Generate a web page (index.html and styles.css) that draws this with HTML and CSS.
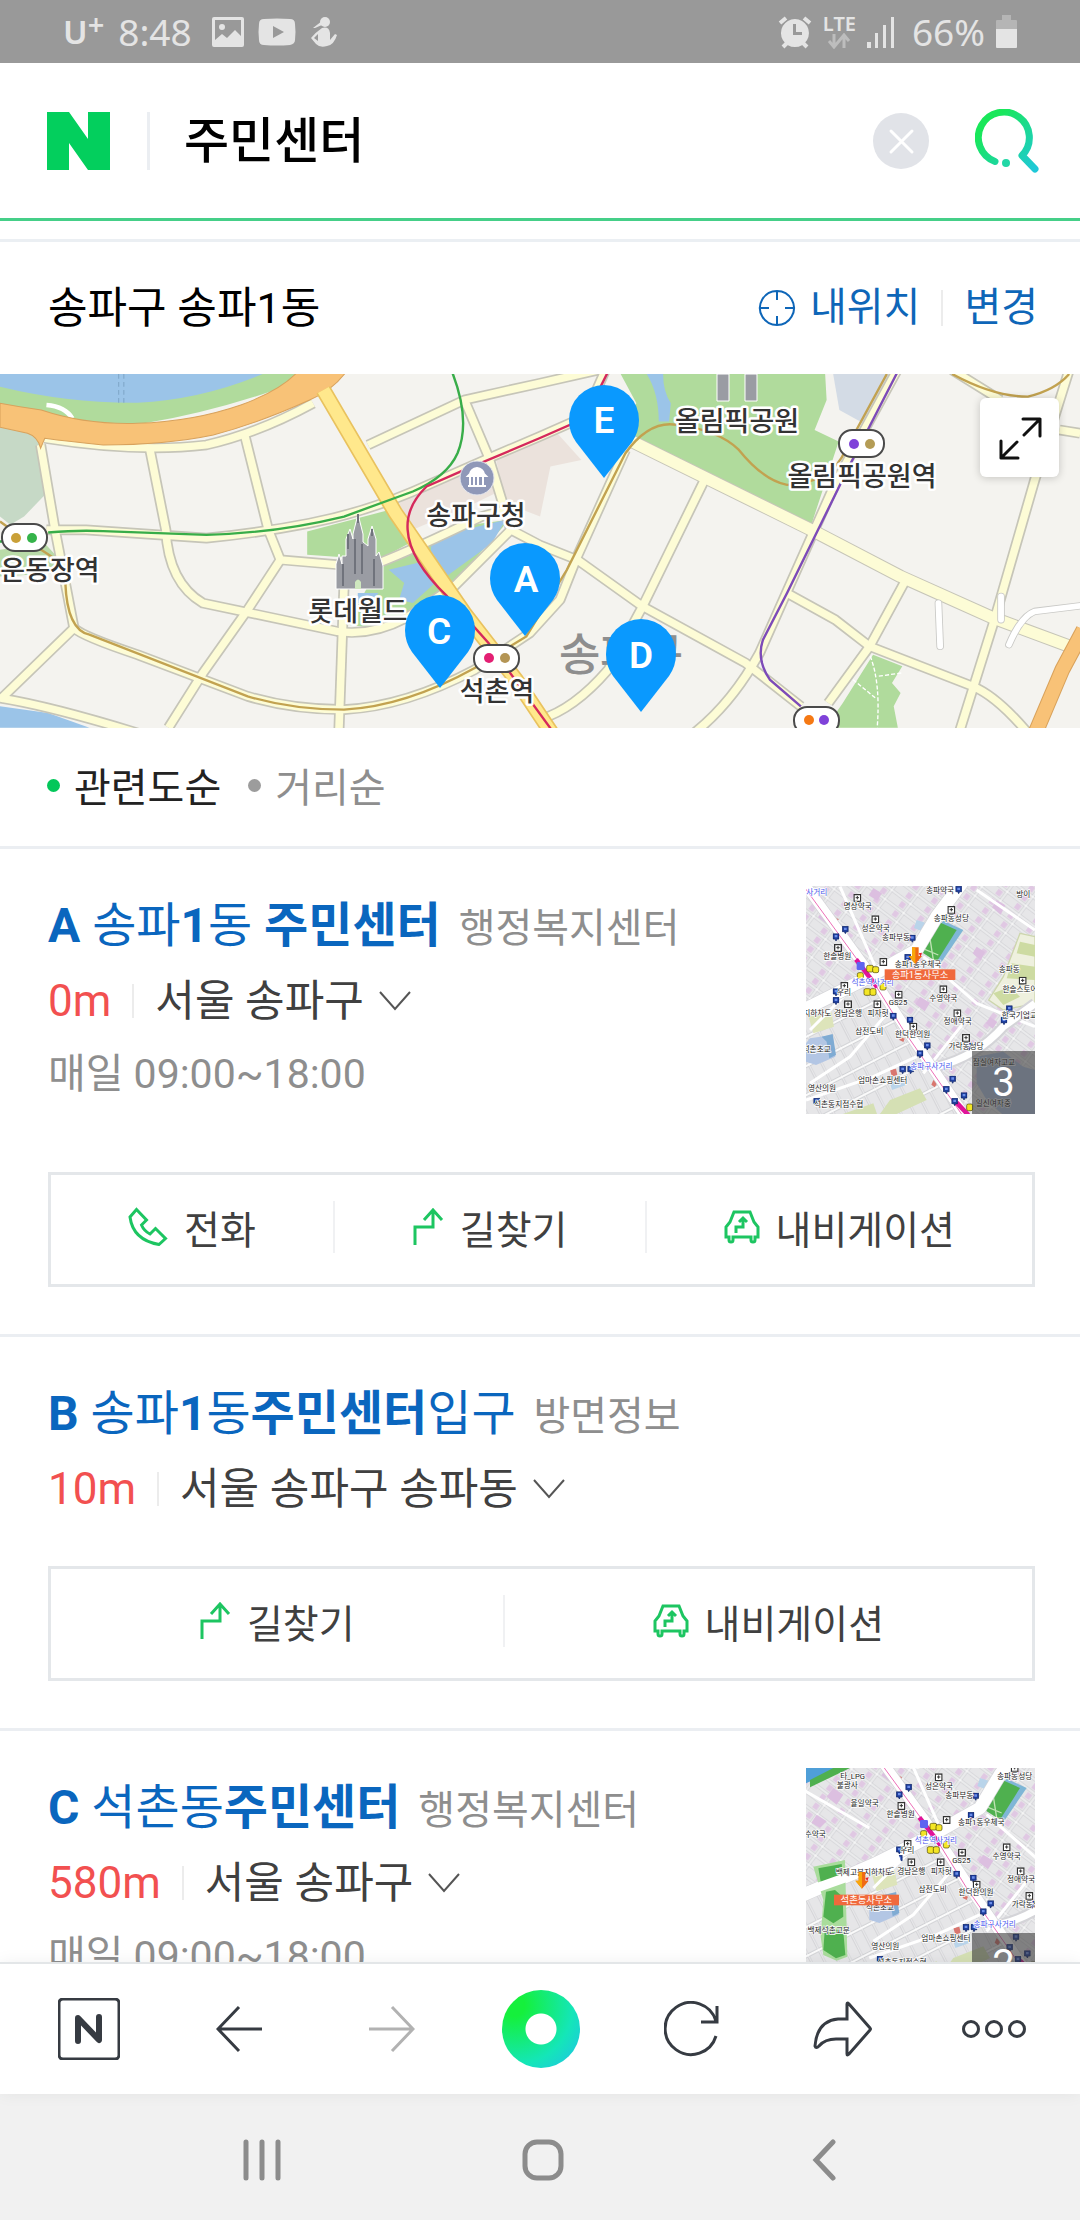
FILE: index.html
```html
<!DOCTYPE html>
<html lang="ko">
<head>
    <meta charset="UTF-8">
    <meta name="viewport" content="width=device-width, initial-scale=1.0">
    <title>주민센터</title>
    <link rel="stylesheet" href="styles.css">
</head>
<body>

    <!-- Shared icons -->
    <svg class="defs" aria-hidden="true">
        <symbol id="icon-phone" viewBox="0 0 40 40">
            <path d="M8.500 2.500 18.500 13 13.500 18Q16 24 22 27L27.500 21.500 37.500 31.500 31 37.500Q5 33 2 10Z"/>
        </symbol>
        <symbol id="icon-route" viewBox="0 0 32 40">
            <path d="M3 38V20H21V4M12 13 21 3 30 13"/>
        </symbol>
        <symbol id="icon-car" viewBox="0 0 36 36">
            <path d="M10 3H26L30 13 34 18V28H31V31Q31 33 29 33T27 31V28H9V31Q9 33 7 33T5 31V28H2V18L6 13Z"/>
            <path d="M12 24V18H19V10M15 13 19 9 23 13"/>
        </symbol>
        <symbol id="icon-down" viewBox="0 0 32 20">
            <path d="M1 1 16 18 31 1"/>
        </symbol>
        <pattern id="blocksA" width="36" height="78" patternUnits="userSpaceOnUse" patternTransform="rotate(-27)">
            <rect width="36" height="78" fill="#fafafa"/>
            <rect x="3" y="4" width="31" height="70" fill="#e6e6e8" stroke="#c6c7cb" stroke-width="2"/>
        </pattern>
        <pattern id="blocksB" width="70" height="34" patternUnits="userSpaceOnUse" patternTransform="rotate(37)">
            <rect width="70" height="34" fill="#fafafa"/>
            <rect x="3" y="3" width="64" height="28" fill="#e6e6e8" stroke="#c6c7cb" stroke-width="2"/>
            <rect x="44" y="8" width="16" height="18" fill="#e0c8e3"/>
        </pattern>
        <symbol id="poi" viewBox="0 0 20 24">
            <path d="M1 1H19V17H13L10 23 7 17H1Z" fill="#1f3f9e" stroke="#0b2060" stroke-width="2"/>
            <path d="M6 5H14V12H6Z" fill="#6c8ee8"/>
        </symbol>
        <symbol id="shop" viewBox="0 0 24 24">
            <path d="M2 2H22V22H2Z" fill="#fff" stroke="#333" stroke-width="4"/>
            <path d="M12 6V16M7 11H17" stroke="#333" stroke-width="3"/>
        </symbol>
        <!-- City blocks around Seokchon station, used by both thumbnails -->
        <g id="streets">
            <rect x="-160" y="0" width="1000" height="900" fill="url(#blocksB)"/>
            <path d="M-160 480 230 320 530 760V900H-160Z" fill="url(#blocksA)"/>
            <path d="M260 320 400 240 735 560V740H540Z" fill="url(#blocksB)"/>
            <g fill="#dcbfe0">
                <path d="M250 55 276 70 262 92 236 76ZM100 120 122 136 108 160 84 142ZM620 90 646 106 632 134 606 112ZM560 230 585 246 572 272 548 250ZM390 380 420 398 404 424 376 402ZM600 440 622 456 608 476 588 460ZM160 200 182 212 172 236 150 220ZM-60 180-30 200-50 230-80 206ZM-110 260-80 280-100 300-126 284Z"/>
            </g>
            <g fill="#b9d4ea">
                <path d="M380 150 410 160 400 185 372 174ZM300 380 322 396 310 416 292 400ZM400 480 424 492 412 510 390 498ZM60 400 90 392 96 410 66 420ZM300 640 340 625 346 646 306 660Z"/>
            </g>
            <g fill="#d9766f">
                <path d="M132 140 146 148 140 160 128 152ZM300 600 318 596 322 614 306 620ZM430 630 442 640 434 652 424 644ZM610 492 626 498 620 508 608 504ZM330 500 344 506 340 516 328 510Z"/>
            </g>
            <!-- Parks and schools -->
            <path d="M690 190 735 200V400L640 420 596 390 640 320Z" fill="#eef0de" stroke="#cdd6ad" stroke-width="4"/>
            <path d="M690 215 735 225V260L680 250ZM665 280 735 290V330L650 325ZM610 370 660 350 690 380 640 405Z" fill="#cddba2"/>
            <path d="M56 440 124 425 132 470 70 490Z" fill="#dde4ba"/>
            <path d="M60 505 128 495 136 560 78 585 48 575V520Z" fill="#b3c6e4"/>
            <path d="M95 500 128 492 138 555 118 565 110 515Z" fill="#7fabd3"/>
            <path d="M560 560 640 545 700 590 735 600V735H640L590 690 560 640Z" fill="#b3c6e4"/>
            <path d="M300 690 390 655 410 690 320 732H270ZM150 735 250 700 262 735Z" fill="#d5e0b4"/>
            <path d="M460 152 520 180 455 275 385 240Z" fill="#7fb6d6"/>
            <path d="M452 158 500 180 440 275 385 240Z" fill="#4fb04f"/>
            <path d="M390 232 445 255M420 205 430 270" stroke="#bfe3b4" stroke-width="4" fill="none"/>
            <!-- Streets -->
            <g fill="none" stroke-linejoin="round">
                <path d="M260 300 150 50M735 180 560 60M400 260 560 400 735 470M180 360 60 480M300 420 180 560 60 640M380 560 250 620 48 690M520 460 400 610M-160 180 48 300" stroke="#fff" stroke-width="9"/>
                <path d="M-160 505 60 410 230 325 380 240 440 140 530 20" stroke="#d4d4d8" stroke-width="42"/>
                <path d="M20 10 250 325 350 480 540 760M440 590Q560 560 640 470L735 400" stroke="#d4d4d8" stroke-width="34"/>
                <path d="M-160 505 60 410 230 325 380 240 440 140 530 20" stroke="#fff" stroke-width="38"/>
                <path d="M20 10 250 325 350 480 540 760" stroke="#fff" stroke-width="30"/>
                <path d="M440 590Q560 560 640 470L735 400" stroke="#fff" stroke-width="22"/>
                <path d="M20 20 250 335 340 480 520 740" stroke="#ec6fb8" stroke-width="3"/>
                <path d="M198 268 262 352M500 698 535 735" stroke="#e0149a" stroke-width="14"/>
            </g>
            <!-- Station exits -->
            <g fill="#f4e626" stroke="#4a4300" stroke-width="2">
                <rect x="230" y="286" width="20" height="20" rx="5"/>
                <rect x="248" y="290" width="18" height="18" rx="5"/>
                <rect x="222" y="356" width="20" height="20" rx="5"/>
                <rect x="240" y="356" width="18" height="20" rx="5"/>
                <rect x="270" y="340" width="18" height="20" rx="5"/>
                <rect x="202" y="308" width="18" height="18" rx="5"/>
                <rect x="530" y="702" width="18" height="20" rx="5"/>
            </g>
            <rect x="200" y="276" width="24" height="24" rx="4" fill="#5f63f0"/>
            <!-- Markers -->
            <use href="#poi" x="128" y="190" width="20" height="24"/>
            <use href="#poi" x="156" y="168" width="20" height="24"/>
            <use href="#poi" x="357" y="194" width="20" height="24"/>
            <use href="#poi" x="343" y="252" width="20" height="24"/>
            <use href="#poi" x="496" y="48" width="20" height="24"/>
            <use href="#poi" x="128" y="355" width="20" height="24"/>
            <use href="#poi" x="128" y="381" width="20" height="24"/>
            <use href="#poi" x="300" y="428" width="20" height="24"/>
            <use href="#poi" x="350" y="440" width="20" height="24"/>
            <use href="#poi" x="402" y="517" width="20" height="24"/>
            <use href="#poi" x="380" y="541" width="20" height="24"/>
            <use href="#poi" x="328" y="588" width="20" height="24"/>
            <use href="#poi" x="352" y="588" width="20" height="24"/>
            <use href="#poi" x="527" y="518" width="20" height="24"/>
            <use href="#poi" x="648" y="406" width="20" height="24"/>
            <use href="#poi" x="632" y="441" width="20" height="24"/>
            <use href="#poi" x="478" y="617" width="20" height="24"/>
            <use href="#poi" x="459" y="648" width="20" height="24"/>
            <use href="#poi" x="512" y="667" width="20" height="24"/>
            <use href="#poi" x="484" y="684" width="20" height="24"/>
            <use href="#poi" x="70" y="684" width="20" height="24"/>
            <use href="#shop" x="190" y="72" width="24" height="24"/>
            <use href="#shop" x="244" y="136" width="24" height="24"/>
            <use href="#shop" x="472" y="108" width="24" height="24"/>
            <use href="#shop" x="132" y="222" width="24" height="24"/>
            <use href="#shop" x="268" y="264" width="24" height="24"/>
            <use href="#shop" x="151" y="336" width="24" height="24"/>
            <use href="#shop" x="162" y="391" width="24" height="24"/>
            <use href="#shop" x="250" y="391" width="24" height="24"/>
            <use href="#shop" x="314" y="362" width="24" height="24"/>
            <use href="#shop" x="448" y="346" width="24" height="24"/>
            <use href="#shop" x="490" y="418" width="24" height="24"/>
            <use href="#shop" x="516" y="492" width="24" height="24"/>
            <use href="#shop" x="686" y="320" width="24" height="24"/>
            <use href="#shop" x="358" y="458" width="24" height="24"/>
            <g class="thumb-label">
                <text x="203" y="116">명상약국</text>
                <text x="257" y="182">성은약국</text>
                <text x="318" y="211">송파부동</text>
                <text x="450" y="68">송파약국</text>
                <text x="484" y="154">송파동성당</text>
                <text x="142" y="267">한솔병원</text>
                <text x="658" y="307">송파동</text>
                <text x="690" y="365">한솔스토어</text>
                <text x="460" y="392">수영약국</text>
                <text x="162" y="374">우리</text>
                <text x="324" y="406">GS25</text>
                <text x="174" y="438">경남은행</text>
                <text x="264" y="438">피자헛</text>
                <text x="238" y="491">삼전도비</text>
                <text x="368" y="502">한덕한의원</text>
                <text x="503" y="463">정애약국</text>
                <text x="528" y="536">가락동성당</text>
                <text x="278" y="640">엄마손쇼핑센터</text>
                <text x="96" y="664">영산의원</text>
                <text x="146" y="712">석촌동지점수협</text>
                <text x="612" y="584">잠실여자고교</text>
                <text x="610" y="708">일신여자중</text>
                <text x="688" y="444">한국기업교</text>
                <text x="700" y="82">방이</text>
                <text x="82" y="438">지하차도</text>
                <text x="80" y="546">석촌초교</text>
                <g class="thumb-label-blue">
                    <text x="70" y="74">길사거리</text>
                    <text x="248" y="345">석촌역사거리</text>
                    <text x="424" y="597">송파구사거리</text>
                </g>
            </g>
        </g>
        <g id="here">
            <path d="M4-36H24V-10H34L14 14-6-10H4Z" fill="#f06a14"/>
            <path d="M4-36H14V14L-6-10H4Z" fill="#f8a70c"/>
            <path d="M24-18 34-20 30-8Z" fill="#e8202c"/>
        </g>
    </svg>

    <div class="status-bar">
        <div class="status-left">
            <span class="carrier">U<sup>+</sup></span>
            <span>8:48</span>
            <svg class="picture-icon" width="32" height="30" viewBox="0 0 32 30">
                <path fill-rule="evenodd" d="M2 0H30Q32 0 32 2V28Q32 30 30 30H2Q0 30 0 28V2Q0 0 2 0ZM3 3V23L10 17 15 21 23 13 29 19V3Z"/>
                <circle cx="10" cy="10" r="3"/>
            </svg>
            <svg width="38" height="28" viewBox="0 0 38 28">
                <path fill-rule="evenodd" d="M6 1Q19 0 32 1 37 1 37 6 38 14 37 22 37 26 32 27 19 28 6 27 1 27 1 22 0 14 1 6 1 1 6 1ZM15 8V20L26 14Z"/>
            </svg>
            <svg width="28" height="32" viewBox="0 0 28 32">
                <circle cx="15" cy="6" r="5"/>
                <path d="M12 5 3 12 5 12 12 9ZM12 12Q19 10 20 17V24L25 18 27 19Q24 29 17 30 10 32 6 28L1 22Q6 16 12 12ZM8 18 4 22 8 25Z" fill-rule="evenodd"/>
            </svg>
        </div>
        <div class="status-right">
            <svg width="34" height="34" viewBox="0 0 34 34">
                <path fill-rule="evenodd" d="M17 4A14 14 0 1 1 16.900 4ZM15 9V20H24V17H18V9Z"/>
                <path d="M2 8 8 3M32 8 26 3M5 32 9 28M29 32 25 28" stroke="#e4e4e4" stroke-width="4"/>
            </svg>
            <span class="network">
                <span>LTE</span>
                <svg width="24" height="16" viewBox="0 0 24 16"><path d="M7 1V13M2 8 7 14 12 8M17 15V3M12 8 17 2 22 8" fill="none" stroke="#bdbdbd" stroke-width="3"/></svg>
            </span>
            <svg width="28" height="32" viewBox="0 0 28 32"><path d="M0 26H4V32H0ZM8 17H11V32H8ZM16 9H19V32H16ZM24 1H27V32H24Z"/></svg>
            <span class="battery-text">66%</span>
            <svg width="22" height="34" viewBox="0 0 22 34">
                <path d="M6 0H15V5H20Q21 5 21 6V14H0V6Q0 5 1 5H6Z" fill="#b5b5b5"/>
                <path d="M0 14H21V32Q21 33 20 33H1Q0 33 0 32Z"/>
            </svg>
        </div>
    </div>

    <form class="search" role="search" onsubmit="return false">
        <a class="search-logo" href="#" aria-label="NAVER">
            <svg width="63" height="58" viewBox="0 0 63 58"><path d="M0 0H22L41 27V0H63V58H41L22 31V58H0Z" fill="#03cf5d"/></svg>
        </a>
        <input class="search-input" type="text" value="주민센터" aria-label="검색어">
        <button class="icon-button" type="reset" aria-label="지우기">
            <svg width="56" height="56" viewBox="0 0 56 56">
                <circle cx="28" cy="28" r="28" fill="#e1e3e8"/>
                <path d="M18 18 39 39M39 18 18 39" stroke="#fff" stroke-width="3" stroke-linecap="round"/>
            </svg>
        </button>
        <button class="icon-button search-submit" type="submit" aria-label="검색">
            <svg width="64" height="64" viewBox="0 0 64 64">
                <linearGradient id="searchFill" x1="0" y1="0" x2="1" y2="1">
                    <stop offset="0.200" stop-color="#19e75a"/>
                    <stop offset="1" stop-color="#1fc8d8"/>
                </linearGradient>
                <path d="M20 52.500A25.500 25.500 0 1 1 47 46.500L60 60" fill="none" stroke="url(#searchFill)" stroke-width="7" stroke-linecap="round" stroke-linejoin="round"/>
                <circle cx="31" cy="54" r="4" fill="#22d7a6"/>
            </svg>
        </button>
    </form>

    <main class="content">
        <div class="location">
            <h1 class="location-name">송파구 송파1동</h1>
            <button class="location-button" type="button">
                <svg width="38" height="38" viewBox="0 0 38 38"><path d="M19 2A17 17 0 1 1 18.900 2ZM19 2V11M19 27V36M2 19H11M27 19H36" fill="none" stroke="#0e66b8" stroke-width="2"/></svg>
                내위치
            </button>
            <button class="location-button" type="button">변경</button>
        </div>

        <div class="map">
            <svg class="map-image" viewBox="0 0 1080 354">
                <rect width="1080" height="354" fill="#f4f3ef"/>
                <g transform="translate(0 -4) scale(0.344 0.333)">
                    <defs>
                        <g id="roads" fill="none" stroke-linejoin="round">
                            <path d="M118 225 160 480 190 640 215 775 0 990"/>
                            <path d="M435 235 482 480Q490 640 590 700L980 785Q1080 800 1180 745L1320 650 1485 480 1568 525 1678 570 1868 710 2168 880 2328 1010"/>
                            <path d="M710 190 780 480 815 570 720 720 590 910 490 1074"/>
                            <path d="M815 570 985 585 1100 580Q1200 540 1400 440L1470 420"/>
                            <path d="M0 985Q150 1010 400 1090"/>
                            <path d="M215 775Q240 800 400 855L720 980Q850 1020 1000 1020 1180 1010 1380 900L1540 790 1628 690 1678 560 1818 240"/>
                            <path d="M130 205Q400 250 600 225 750 190 910 100"/>
                            <path d="M1000 650 985 1090"/>
                            <path d="M1070 225 1350 90 1568 40 1740 0M1350 90 1420 260 1485 480"/>
                            <path d="M135 480H250L600 505Q750 490 900 460 1050 430 1200 365L1420 265 1568 200 1700 140 1760 0"/>
                            <path d="M1838 215 2358 480 2618 620 2888 745 3136 840" stroke-width="34"/>
                            <path d="M2048 330 1868 710 1768 900Q1668 1020 1568 1050"/>
                            <path d="M2608 0 2428 340 2208 850Q2128 1000 2018 1090"/>
                            <path d="M2288 670 2428 750 2528 830 2828 950Q2898 980 2988 1090"/>
                            <path d="M2628 640 2528 830 2408 1000"/>
                            <path d="M3108 0 3008 330 2888 760 2788 1090M3080 180 3140 190M2768 0 2908 90"/>
                        </g>
                    </defs>
                    <!-- Water, parks and blocks -->
                    <path d="M0 0H890L800 60Q600 130 420 160 300 165 200 145L0 105Z" fill="#b0db9c"/>
                    <path d="M0 0H790Q600 88 400 98 200 100 0 50Z" fill="#9bc4e8"/>
                    <path d="M345 12V98M360 12V98" stroke="#7fa6c8" stroke-width="3" stroke-dasharray="14 10"/>
                    <path d="M135 105Q190 110 210 145" fill="none" stroke="#fff" stroke-width="14"/>
                    <path d="M0 172 85 190Q105 200 115 225L135 370 70 440 30 465 0 440Z" fill="#c6d9c6"/>
                    <path d="M0 540 130 520 165 560 160 610 0 620Z" fill="#b9dba8"/>
                    <path d="M0 1010 140 1030 260 1074H0Z" fill="#9bc4e8"/>
                    <path d="M893 485 1150 415 1190 520 1100 570 893 555Z" fill="#b0db9c"/>
                    <path d="M1100 590 1200 530 1330 470 1480 450 1320 640 1180 730 1090 775 1010 765Z" fill="#b0db9c"/>
                    <path d="M1255 515 1330 485 1470 450 1430 520 1290 625 1250 570Z" fill="#9bc4e8"/>
                    <path d="M1130 600 1230 575 1275 630 1200 700 1160 690 1175 640ZM1040 670H1100L1080 700H1040Z" fill="#9bc4e8"/>
                    <path d="M1160 400 1240 350 1350 310 1420 290 1440 370 1380 400 1200 480ZM1440 260 1568 210 1620 190 1690 270 1600 290 1570 440 1470 400Z" fill="#ebe2dc"/>
                    <path d="M1798 0H2398L2403 90 2368 180 2438 215 2360 460 1838 220 1780 200 1850 100Z" fill="#b0db9c"/>
                    <path d="M1880 0H1928Q1925 60 1950 100L1945 155H1915Q1915 70 1880 12Z" fill="#9bc4e8"/>
                    <path d="M2420 0H2600L2510 160 2440 120Z" fill="#d3dbe5"/>
                    <path d="M2538 855 2623 890 2593 940 2618 970 2598 1010 2610 1074H2400L2450 1000Z" fill="#b0db9c"/>
                    <path d="M2530 860Q2560 940 2550 1074M2480 930 2545 985M2620 910 2550 920" fill="none" stroke="#fff" stroke-width="4" stroke-dasharray="12 6"/>
                    <!-- Roads -->
                    <use href="#roads" stroke="#c6c5b8" stroke-width="32"/>
                    <path d="M1838 215 2358 480 2618 620 2888 745 3136 840" fill="none" stroke="#c6c5b8" stroke-width="40"/>
                    <use href="#roads" stroke="#fdfcd6" stroke-width="22"/>
                    <path d="M2728 700 2733 830M2933 825Q2968 740 3008 725L3140 708M2910 680V750" fill="none" stroke="#c9c9c6" stroke-width="22" stroke-linecap="round"/>
                    <path d="M2728 700 2733 830M2933 825Q2968 740 3008 725L3140 708M2910 680V750" fill="none" stroke="#fff" stroke-width="17" stroke-linecap="round"/>
                    <path d="M0 100Q60 112 120 120 250 165 400 160 560 155 700 105 820 60 870 0H1010Q970 60 900 90 750 160 620 195 480 225 300 225 200 215 130 205L118 235Q110 200 80 190L0 172Z" fill="#f8c277" stroke="#d8a25c" stroke-width="3"/>
                    <path d="M940 60 1150 430 1350 730 1500 930 1610 1100" fill="none" stroke="#e9c25f" stroke-width="46"/>
                    <path d="M940 60 1150 430 1350 730 1500 930 1610 1100" fill="none" stroke="#ffe88c" stroke-width="36"/>
                    <path d="M3150 780 3088 900 3010 1090" fill="none" stroke="#d8a25c" stroke-width="46"/>
                    <path d="M3150 780 3088 900 3010 1090" fill="none" stroke="#f8c277" stroke-width="40"/>
                    <!-- Subway lines -->
                    <g fill="none" stroke-width="7">
                        <path d="M0 455 60 500 150 560 190 640Q195 780 260 795L720 980Q850 1020 1000 1020 1180 1010 1380 895L1530 800 1648 600 1818 250Q1888 150 1968 165 2088 180 2148 240 2218 330 2288 345 2418 340 2458 240L2578 12M2768 12Q2888 80 2988 80 3068 60 3108 12" stroke="#c2a250"/>
                        <path d="M0 515H20M140 488Q230 480 300 484L600 495Q800 490 1000 440L1200 365Q1300 320 1330 250 1370 150 1312 0" stroke="#38ad49"/>
                        <path d="M1610 1090 1420 820 1300 680Q1190 570 1185 480 1180 410 1240 350L1350 300 1568 205 1700 145 1770 0" stroke="#d5295c"/>
                        <path d="M2612 0 2468 290 2288 670 2218 810Q2198 870 2238 930L2328 1010" stroke="#7d4bb8"/>
                    </g>
                </g>
                <!-- Landmarks -->
                <g fill="#9a9ca3" stroke="#fff" stroke-width="1">
                    <path d="M717 0H729V27H717ZM745 0H757V27H745Z"/>
                    <path d="M336 215V190L339 180 342 190V182L346 182V165L350 155 353 165V160L358 140 363 160V168L368 172V165L372 152 376 165V182L379 178 383 192V215Z"/>
                </g>
                <path d="M358 140V149M372 155V162M348 160V175M355 165V200M362 170V200M343 190V212M374 185V212" stroke="#70737c" stroke-width="2"/>
                <path d="M355 215V208Q358 203 361 208V215Z" fill="#cfe8bf"/>
                <circle cx="477" cy="104" r="17" fill="#8f98b8" stroke="#e4e6ee" stroke-width="1"/>
                <path d="M470 100Q471 95 477 94 483 95 484 100L486 102H468ZM470 103V111M474 103V111M478 103V111M483 103V111M468 112H486" fill="#fff" stroke="#fff" stroke-width="2"/>
                <text class="district" x="621" y="297">송파구</text>
                <g class="place">
                    <text x="50" y="206">운동장역</text>
                    <text x="358" y="247">롯데월드</text>
                    <text x="476" y="151">송파구청</text>
                    <text x="497" y="327">석촌역</text>
                    <text x="737" y="57">올림픽공원</text>
                    <text x="862" y="112">올림픽공원역</text>
                </g>
                <g fill="#fff" stroke="#4a4a4a" stroke-width="2">
                    <rect x="2" y="150" width="45" height="27" rx="13"/>
                    <rect x="474" y="271" width="45" height="27" rx="13"/>
                    <rect x="839" y="56" width="45" height="27" rx="13"/>
                    <rect x="794" y="333" width="45" height="27" rx="13"/>
                </g>
                <circle cx="16" cy="164" r="5" fill="#c9a038"/>
                <circle cx="32" cy="164" r="5" fill="#35b34a"/>
                <circle cx="489" cy="284" r="5" fill="#e31f73"/>
                <circle cx="505" cy="284" r="5" fill="#b49555"/>
                <circle cx="854" cy="70" r="5" fill="#7f42d9"/>
                <circle cx="870" cy="70" r="5" fill="#b49c55"/>
                <circle cx="809" cy="346" r="5" fill="#f57914"/>
                <circle cx="824" cy="346" r="5" fill="#7f42d9"/>
                <!-- Result pins -->
                <g fill="#0a99fe">
                    <path id="pin" d="M604 104 576 68Q569 58 569 46A35 35 0 0 1 639 46Q639 58 632 68Z"/>
                    <use href="#pin" x="-79" y="158"/>
                    <use href="#pin" x="-164" y="210"/>
                    <use href="#pin" x="37" y="234"/>
                </g>
                <g class="pin-letter">
                    <text x="604" y="59">E</text>
                    <text x="526" y="218">A</text>
                    <text x="439" y="270">C</text>
                    <text x="641" y="294">D</text>
                </g>
            </svg>
            <button class="map-expand" type="button" aria-label="지도 크게 보기">
                <svg width="44" height="44" viewBox="0 0 44 44"><path d="M25 3H42V20M42 3 26 19M3 25V42H20M3 42 19 26" fill="none" stroke="#111" stroke-width="3" stroke-linejoin="round" stroke-linecap="round"/></svg>
            </button>
        </div>

        <div class="sort">
            <button class="sort-option active" type="button">관련도순</button>
            <button class="sort-option" type="button">거리순</button>
        </div>

        <ul class="results">
            <li class="result">
                <div class="result-top">
                    <div class="result-info">
                        <h2 class="result-title"><a href="#"><b>A</b> 송파<b>1</b>동 <b>주민센터</b></a> <span class="category">행정복지센터</span></h2>
                        <p class="address"><span class="distance">0m</span><a class="area" href="#">서울 송파구 <svg class="down" width="32" height="20"><use href="#icon-down"/></svg></a></p>
                        <p class="hours">매일 09:00~18:00</p>
                    </div>
                    <a class="thumb" href="#">
                        <svg viewBox="48 48 687 684">
                            <use href="#streets"/>
                            <text class="thumb-label" x="384" y="290">송파1동우체국</text>
                            <use href="#here" x="362" y="268"/>
                            <rect x="284" y="298" width="212" height="32" fill="#f0693c"/>
                            <text class="thumb-office" x="390" y="323">송파1동사무소</text>
                        </svg>
                        <span class="count">3</span>
                    </a>
                </div>
                <div class="actions">
                    <a href="#"><svg width="40" height="40"><use href="#icon-phone"/></svg>전화</a>
                    <a href="#"><svg width="32" height="40"><use href="#icon-route"/></svg>길찾기</a>
                    <a href="#"><svg width="36" height="36"><use href="#icon-car"/></svg>내비게이션</a>
                </div>
            </li>
            <li class="result">
                <div class="result-top">
                    <div class="result-info">
                        <h2 class="result-title"><a href="#"><b>B</b> 송파<b>1</b>동<b>주민센터</b>입구</a> <span class="category">방면정보</span></h2>
                        <p class="address"><span class="distance">10m</span><a class="area" href="#">서울 송파구 송파동 <svg class="down" width="32" height="20"><use href="#icon-down"/></svg></a></p>
                    </div>
                </div>
                <div class="actions">
                    <a href="#"><svg width="32" height="40"><use href="#icon-route"/></svg>길찾기</a>
                    <a href="#"><svg width="36" height="36"><use href="#icon-car"/></svg>내비게이션</a>
                </div>
            </li>
            <li class="result">
                <div class="result-top">
                    <div class="result-info">
                        <h2 class="result-title"><a href="#"><b>C</b> 석촌동<b>주민센터</b></a> <span class="category">행정복지센터</span></h2>
                        <p class="address"><span class="distance">580m</span><a class="area" href="#">서울 송파구 <svg class="down" width="32" height="20"><use href="#icon-down"/></svg></a></p>
                        <p class="hours">매일 09:00~18:00</p>
                    </div>
                    <a class="thumb" href="#">
                        <svg viewBox="48 54 687 684">
                            <use href="#streets" x="190" y="-66"/>
                            <path d="M48 54H150L48 100Z" fill="#4f9fd8"/>
                            <path d="M60 90 130 54H180L60 112Z" fill="#4fb04f"/>
                            <path d="M70 350 165 330 172 620 140 632 100 615 92 560 100 450Z" fill="#a9dc9c"/>
                            <path d="M85 355 155 342 160 385 92 395ZM108 425 135 420 158 440 160 500 130 520 100 500ZM105 530 160 545 166 615 138 625 100 600Z" fill="#4fb04f"/>
                            <path d="M48 425 330 325" stroke="#fff" stroke-width="28"/>
                            <g class="thumb-label">
                                <text x="188" y="86">타_LPG</text>
                                <text x="172" y="115">불광사</text>
                                <text x="224" y="169">율일약국</text>
                                <text x="76" y="260">수약국</text>
                                <text x="222" y="374">백제고분지하차도</text>
                                <text x="116" y="548">백제석촌고분</text>
                                <text x="574" y="224">송파1동우체국</text>
                            </g>
                            <use href="#here" x="202" y="402"/>
                            <rect x="132" y="434" width="195" height="32" fill="#f0693c"/>
                            <text class="thumb-office" x="229" y="460">석촌동사무소</text>
                        </svg>
                        <span class="count">2</span>
                    </a>
                </div>
            </li>
        </ul>
    </main>

    <!-- Browser toolbar -->
    <nav class="toolbar" aria-label="도구 막대">
        <button type="button" aria-label="네이버 홈">
            <svg width="62" height="62" viewBox="0 0 62 62">
                <rect x="1" y="1" width="60" height="60" rx="4"/>
                <path d="M20 43V20L41 42V19" stroke-width="6" stroke-linecap="round" stroke-linejoin="round"/>
            </svg>
        </button>
        <button type="button" aria-label="뒤로">
            <svg width="48" height="48" viewBox="0 0 48 48"><path d="M46 24H2M23 2 2 24 23 46"/></svg>
        </button>
        <button class="disabled" type="button" aria-label="앞으로">
            <svg width="48" height="48" viewBox="0 0 48 48"><path d="M2 24H46M25 2 46 24 25 46"/></svg>
        </button>
        <button type="button" aria-label="그린닷"><span class="green-dot"></span></button>
        <button type="button" aria-label="새로고침">
            <svg width="56" height="56" viewBox="0 0 56 56"><path d="M52 35A26 26 0 1 1 52 20M53 5V21H37"/></svg>
        </button>
        <button type="button" aria-label="공유">
            <svg width="60" height="56" viewBox="0 0 60 56"><path d="M34 3Q34 1 36 3L57 27Q58 28 57 29L36 53Q34 55 34 53V38H23Q12 38 6 45 3 48 2 45 4 20 25 18H34Z"/></svg>
        </button>
        <button type="button" aria-label="더보기">
            <svg width="64" height="18" viewBox="0 0 64 18"><circle cx="9" cy="9" r="7.500"/><circle cx="32" cy="9" r="7.500"/><circle cx="55" cy="9" r="7.500"/></svg>
        </button>
    </nav>

    <!-- Android navigation -->
    <nav class="system-nav" aria-label="시스템">
        <button type="button" aria-label="최근 앱">
            <svg width="40" height="42" viewBox="0 0 40 42"><path d="M4 3V39M20 3V39M36 3V39"/></svg>
        </button>
        <button type="button" aria-label="홈">
            <svg width="42" height="42" viewBox="0 0 42 42"><rect x="3" y="3" width="36" height="36" rx="12"/></svg>
        </button>
        <button type="button" aria-label="이전">
            <svg width="26" height="42" viewBox="0 0 26 42"><path d="M22 3 5 21 22 39"/></svg>
        </button>
    </nav>

</body>
</html>
```

FILE: styles.css
```css
* {
    box-sizing: border-box;
}

body {
    display: flex;
    flex-direction: column;
    height: 100vh;
    margin: 0;
    background: #fff;
    color: #000;
    font-family: Roboto, "Noto Sans CJK KR", sans-serif;
    font-size: 40px;
}

h1, h2, p, ul {
    margin: 0;
    padding: 0;
    font-weight: normal;
}

a {
    color: inherit;
    text-decoration: none;
}

button {
    padding: 0;
    border: none;
    background: none;
    color: inherit;
    font: inherit;
    cursor: pointer;
}

svg {
    display: block;
    flex: none;
}

.defs {
    position: absolute;
    width: 0;
    height: 0;
}

/* Status bar */
.status-bar {
    display: flex;
    flex: none;
    justify-content: space-between;
    align-items: center;
    height: 63px;
    padding: 0 62px 0 63px;
    background: #999;
    color: #e4e4e4;
    font-family: "Noto Sans", sans-serif;
    font-size: 37px;
    line-height: 63px;
}

.status-bar svg {
    fill: #e4e4e4;
}

.status-left {
    display: flex;
    align-items: center;
    gap: 14px;
}

.picture-icon {
    margin-left: 6px;
}

.carrier {
    font-size: 33px;
    font-weight: 600;
}

.carrier sup {
    font-size: 29px;
    line-height: 0;
    vertical-align: 9px;
}

.status-right {
    display: flex;
    align-items: center;
    gap: 11px;
}

.network {
    display: flex;
    flex-direction: column;
    align-items: center;
    font-size: 20px;
    font-weight: 600;
    line-height: 18px;
}

.battery-text {
    margin-left: 6px;
}

/* Search box */
.search {
    display: flex;
    flex: none;
    align-items: center;
    height: 158px;
    padding: 0 41px 0 47px;
    border-bottom: 3px solid #45cf88;
}

.search-logo {
    padding-right: 37px;
    border-right: 3px solid #ebeef2;
}

.search-input {
    flex: 1;
    min-width: 0;
    padding: 0 0 8px 34px;
    border: none;
    outline: none;
    background: none;
    color: #000;
    font-family: inherit;
    font-size: 49px;
    font-weight: 500;
}

.search-submit {
    margin-left: 46px;
}

.content {
    flex: 1;
    min-height: 0;
    overflow: hidden;
    padding-top: 18px;
}

/* Current location */
.location {
    display: flex;
    align-items: center;
    height: 135px;
    padding: 0 42px 0 48px;
    border-top: 3px solid #ebeff3;
}

.location-name {
    flex: 1;
    padding-bottom: 8px;
    font-size: 43px;
}

.location-button {
    display: flex;
    align-items: center;
    gap: 14px;
    color: #0e66b8;
    line-height: 36px;
}

.location-button + .location-button {
    margin-left: 21px;
    padding-left: 21px;
    border-left: 2px solid #ececec;
}

/* Map */
.map {
    position: relative;
}

.map-image {
    width: 100%;
    height: auto;
}

.place {
    fill: #333;
    stroke: #fff;
    stroke-width: 5px;
    stroke-linejoin: round;
    paint-order: stroke;
    font-size: 27px;
    font-weight: 500;
    text-anchor: middle;
}

.district {
    fill: #8e8e8e;
    font-size: 45px;
    font-weight: 500;
    text-anchor: middle;
}

.pin-letter {
    fill: #fff;
    font-family: Roboto, sans-serif;
    font-size: 37px;
    font-weight: 600;
    text-anchor: middle;
}

.map-expand {
    position: absolute;
    top: 24px;
    right: 21px;
    display: flex;
    justify-content: center;
    align-items: center;
    width: 79px;
    height: 79px;
    border-radius: 6px;
    background: #fff;
    box-shadow: 0 1px 8px rgba(0, 0, 0, 0.2);
}

/* Sort options */
.sort {
    display: flex;
    align-items: center;
    gap: 27px;
    height: 118px;
    padding: 0 47px 4px;
}

.sort-option {
    display: flex;
    align-items: center;
    gap: 14px;
    color: #8e8e8e;
}

.sort-option::before {
    content: "";
    width: 13px;
    height: 13px;
    border-radius: 50%;
    background: #9c9c9c;
}

.sort-option.active {
    color: #222;
}

.sort-option.active::before {
    background: #03c75a;
}

/* Results */
.results {
    list-style: none;
}

.result {
    padding: 37px 45px 47px 48px;
    border-top: 3px solid #ebeef2;
}

.result-top {
    display: flex;
    justify-content: space-between;
}

.result-title {
    height: 80px;
    color: #0a66be;
    font-size: 48px;
    line-height: 80px;
}

.category {
    margin-left: 6px;
    color: #8e8e8e;
    font-size: 40px;
}

.address {
    display: flex;
    align-items: center;
    height: 74px;
    padding-bottom: 4px;
    font-size: 43px;
}

.distance {
    margin-right: 21px;
    color: #f25050;
    font-size: 44px;
}

.area {
    display: flex;
    align-items: center;
    gap: 15px;
    padding-left: 21px;
    border-left: 2px solid #ececec;
    color: #404040;
    line-height: 34px;
}

.down {
    fill: none;
    stroke: #555;
    stroke-width: 2px;
}

.hours {
    color: #8e8e8e;
    font-size: 41px;
    line-height: 68px;
}

.thumb {
    position: relative;
    width: 229px;
    height: 228px;
    margin-bottom: 20px;
}

.thumb svg {
    width: 100%;
    height: 100%;
}

.thumb-label {
    fill: #222;
    stroke: #fff;
    stroke-width: 4px;
    paint-order: stroke;
    font-size: 23px;
    text-anchor: middle;
}

.thumb-label-blue {
    fill: #4755ee;
}

.thumb-office {
    fill: #fff;
    font-size: 28px;
    text-anchor: middle;
}

.count {
    position: absolute;
    right: 0;
    bottom: 0;
    width: 63px;
    height: 63px;
    background: rgba(60, 60, 60, 0.6);
    color: #fff;
    line-height: 63px;
    text-align: center;
}

.actions {
    display: flex;
    align-items: center;
    height: 115px;
    margin-top: 38px;
    padding-bottom: 6px;
    border: 3px solid #e4e7ea;
    color: #404040;
    font-size: 39px;
}

.actions a {
    display: flex;
    flex: 1 1 auto;
    justify-content: center;
    align-items: center;
    gap: 16px;
    height: 52px;
}

.actions a + a {
    border-left: 2px solid #f0f1f3;
}

.actions svg {
    fill: none;
    stroke: #1dc561;
    stroke-width: 3px;
}

/* Bottom bars */
.toolbar {
    position: relative;
    display: grid;
    flex: none;
    grid-template-columns: repeat(7, 1fr);
    height: 132px;
    padding: 0 11px 0 14px;
    border-top: 2px solid #e3e6e8;
    background: #fff;
    box-shadow: 0 0 16px rgba(0, 0, 0, 0.06);
}

.toolbar button,
.system-nav button {
    display: flex;
    justify-content: center;
    align-items: center;
}

.toolbar svg {
    fill: none;
    stroke: #363b42;
    stroke-width: 3px;
}

.toolbar .disabled svg {
    stroke: #b2b2b2;
}

.green-dot {
    width: 78px;
    height: 78px;
    border-radius: 50%;
    background: radial-gradient(circle, #fff 15px, transparent 16px), radial-gradient(circle at 15% 20%, #15f03c 12%, #14e6b8 65%, #22b8f5 105%);
}

.system-nav {
    display: grid;
    flex: none;
    grid-template-columns: repeat(3, 1fr);
    height: 126px;
    padding: 6px 115px 0 121px;
    background: #f1f1f1;
}

.system-nav svg {
    fill: none;
    stroke: #8c8c8c;
    stroke-width: 5px;
    stroke-linecap: round;
}
```
